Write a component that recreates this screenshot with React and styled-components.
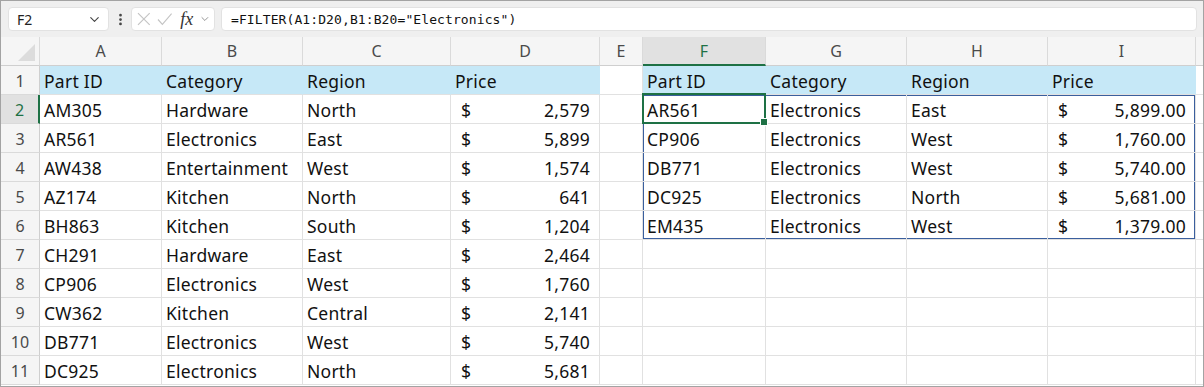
import React from "react";
import styled, { createGlobalStyle, css } from "styled-components";
import { ChevronDown, EllipsisVertical } from "lucide-react";

const Global = createGlobalStyle`
  html, body { margin: 0; padding: 0; background: #ffffff; }
  * { box-sizing: border-box; }
`;

const Frame = styled.div`
  width: 1204px;
  height: 387px;
  border: 1px solid #a3a3a3;
  overflow: hidden;
  background: #ffffff;
  display: flex;
  flex-direction: column;
`;

const Toolbar = styled.div`
  height: 36px;
  flex: none;
  background: #efefef;
  display: flex;
  align-items: center;
  padding: 0 6px 0 7px;
`;

const NameBox = styled.div`
  width: 101px;
  height: 24px;
  background: #fff;
  border-radius: 4px;
  border: 1px solid #e2e2e2;
  display: flex;
  align-items: center;
  justify-content: space-between;
  padding: 0 6px 0 8px;
  font-family: "Noto Sans", sans-serif;
  font-size: 14px;
  color: #222;
`;

const Dots = styled.div`
  width: 22px;
  display: flex;
  justify-content: center;
  color: #444;
`;

const FxBox = styled.div`
  width: 84px;
  height: 24px;
  background: #fff;
  border-radius: 4px;
  border: 1px solid #e2e2e2;
  display: flex;
  align-items: center;
  padding: 0 3px 0 5px;
  gap: 6px;
  color: #c4c4c4;
`;

const Fx = styled.span`
  font-family: "Liberation Serif", serif;
  font-style: italic;
  font-size: 18px;
  color: #333;
  margin-left: 2px;
  line-height: 1;
`;

const FormulaBox = styled.div`
  flex: 1;
  margin-left: 6px;
  height: 24px;
  background: #fff;
  border-radius: 4px;
  border: 1px solid #e2e2e2;
  display: flex;
  align-items: center;
  padding-left: 9px;
  font-family: "DejaVu Sans Mono", monospace;
  font-size: 13px;
  letter-spacing: 0.1px;
  color: #111;
`;

const Sheet = styled.div`
  flex: 1;
  display: grid;
  grid-template-columns: 39px 122px 141px 148px 149px 43px 123px 141px 141px 148px 1fr;
  grid-auto-rows: 29px;
  font-family: "Noto Sans", sans-serif;
`;

const Corner = styled.div`
  position: relative;
  background: #f5f5f5;
  border-right: 1px solid #dadada;
  border-bottom: 1px solid #cfcfcf;
  &::after {
    content: "";
    position: absolute;
    right: 4px;
    bottom: 4px;
    width: 0;
    height: 0;
    border-left: 17px solid transparent;
    border-bottom: 17px solid #dcdcdc;
  }
`;

const ColHead = styled.div`
  background: ${(p) => (p.$active ? "#e1e1e1" : "#f5f5f5")};
  border-right: 1px solid #dadada;
  border-bottom: ${(p) => (p.$active ? "2px solid #1e7145" : "1px solid #cfcfcf")};
  display: flex;
  align-items: center;
  justify-content: center;
  font-size: 16px;
  color: ${(p) => (p.$active ? "#1e7145" : "#4a4a4a")};
  padding-top: ${(p) => (p.$active ? "1px" : "0")};
`;

const RowHead = styled.div`
  background: ${(p) => (p.$active ? "#e1e1e1" : "#f5f5f5")};
  border-right: ${(p) => (p.$active ? "2px solid #1e7145" : "1px solid #cfcfcf")};
  border-bottom: 1px solid #dadada;
  display: flex;
  align-items: center;
  justify-content: center;
  padding-top: 2px;
  font-size: 16px;
  color: ${(p) => (p.$active ? "#1e7145" : "#4a4a4a")};
`;

const SPILL = "#3a5f9e";

const Cell = styled.div`
  position: relative;
  background: ${(p) => (p.$fill ? "#c6e8f7" : "#ffffff")};
  border-right: 1px solid ${(p) => (p.$fill ? "#c6e8f7" : "#e1e1e1")};
  border-bottom: 1px solid #e1e1e1;
  display: flex;
  align-items: center;
  justify-content: space-between;
  padding: 1px 9px 0 4px;
  font-size: 17.5px;
  letter-spacing: 0.25px;
  color: #111;
  white-space: nowrap;
  ${(p) => {
    const s = [];
    if (p.$st) s.push(`inset 0 1px 0 0 ${SPILL}`);
    if (p.$sb) s.push(`inset 0 -1px 0 0 ${SPILL}`);
    if (p.$sl) s.push(`inset 1px 0 0 0 ${SPILL}`);
    if (p.$sr) s.push(`inset -1px 0 0 0 ${SPILL}`);
    return s.length ? css`box-shadow: ${s.join(", ")};` : "";
  }}
  ${(p) =>
    p.$selected &&
    css`
      &::after {
        content: "";
        position: absolute;
        left: -1px;
        top: -2px;
        right: -1px;
        bottom: -1px;
        border: 2px solid #1e7145;
        pointer-events: none;
        z-index: 2;
      }
      &::before {
        content: "";
        position: absolute;
        right: -3px;
        bottom: -3px;
        width: 6px;
        height: 6px;
        background: #1e7145;
        border: 1px solid #fff;
        z-index: 3;
      }
    `}
`;

const Dollar = styled.span`
  padding-left: 6px;
`;

const CancelIcon = () => (
  <svg width="14" height="14" viewBox="0 0 14 14" fill="none" stroke="currentColor" strokeWidth="1.2">
    <path d="M1 1 L13 13 M13 1 L1 13" />
  </svg>
);

const EnterIcon = () => (
  <svg width="16" height="14" viewBox="0 0 16 14" fill="none" stroke="currentColor" strokeWidth="1.2">
    <path d="M1 7.5 L5.5 12.5 L15 1.5" />
  </svg>
);

const cols = ["A", "B", "C", "D", "E", "F", "G", "H", "I", ""];

const left = [
  ["AM305", "Hardware", "North", "2,579"],
  ["AR561", "Electronics", "East", "5,899"],
  ["AW438", "Entertainment", "West", "1,574"],
  ["AZ174", "Kitchen", "North", "641"],
  ["BH863", "Kitchen", "South", "1,204"],
  ["CH291", "Hardware", "East", "2,464"],
  ["CP906", "Electronics", "West", "1,760"],
  ["CW362", "Kitchen", "Central", "2,141"],
  ["DB771", "Electronics", "West", "5,740"],
  ["DC925", "Electronics", "North", "5,681"],
];

const right = [
  ["AR561", "Electronics", "East", "5,899.00"],
  ["CP906", "Electronics", "West", "1,760.00"],
  ["DB771", "Electronics", "West", "5,740.00"],
  ["DC925", "Electronics", "North", "5,681.00"],
  ["EM435", "Electronics", "West", "1,379.00"],
];

const header = ["Part ID", "Category", "Region", "Price"];

function Price({ value, ...rest }) {
  return (
    <Cell {...rest}>
      <Dollar>$</Dollar>
      <span>{value}</span>
    </Cell>
  );
}

export default function App() {
  const rows = [];
  rows.push(
    <RowHead key="rh1">1</RowHead>,
    ...header.map((h, i) => (
      <Cell key={"l1" + i} $fill>
        <span>{h}</span>
      </Cell>
    )),
    <Cell key="e1" />,
    ...header.map((h, i) => (
      <Cell key={"r1" + i} $fill>
        <span>{h}</span>
      </Cell>
    )),
    <Cell key="j1" />
  );
  for (let r = 0; r < 10; r++) {
    const n = r + 2;
    const L = left[r];
    const R = right[r];
    const inSpill = r < 5;
    const sp = (ci) => ({
      $st: inSpill && r === 0,
      $sb: inSpill && r === 4,
      $sl: inSpill && ci === 0,
      $sr: inSpill && ci === 3,
    });
    rows.push(
      <RowHead key={"rh" + n} $active={n === 2}>
        {n}
      </RowHead>,
      <Cell key={"a" + n}>
        <span>{L[0]}</span>
      </Cell>,
      <Cell key={"b" + n}>
        <span>{L[1]}</span>
      </Cell>,
      <Cell key={"c" + n}>
        <span>{L[2]}</span>
      </Cell>,
      <Price key={"d" + n} value={L[3]} />,
      <Cell key={"e" + n} />
    );
    if (R) {
      rows.push(
        <Cell key={"f" + n} {...sp(0)} $selected={r === 0}>
          <span>{R[0]}</span>
        </Cell>,
        <Cell key={"g" + n} {...sp(1)}>
          <span>{R[1]}</span>
        </Cell>,
        <Cell key={"h" + n} {...sp(2)}>
          <span>{R[2]}</span>
        </Cell>,
        <Price key={"i" + n} value={R[3]} {...sp(3)} />
      );
    } else {
      rows.push(
        <Cell key={"f" + n} />,
        <Cell key={"g" + n} />,
        <Cell key={"h" + n} />,
        <Cell key={"i" + n} />
      );
    }
    rows.push(<Cell key={"j" + n} />);
  }

  return (
    <>
      <Global />
      <Frame>
        <Toolbar>
          <NameBox>
            <span>F2</span>
            <ChevronDown size={15} color="#444" strokeWidth={1.8} />
          </NameBox>
          <Dots>
            <EllipsisVertical size={15} strokeWidth={2.4} />
          </Dots>
          <FxBox>
            <CancelIcon />
            <EnterIcon />
            <Fx>fx</Fx>
            <ChevronDown size={12} color="#777" strokeWidth={1.6} />
          </FxBox>
          <FormulaBox>=FILTER(A1:D20,B1:B20="Electronics")</FormulaBox>
        </Toolbar>
        <Sheet>
          <Corner />
          {cols.map((c) => (
            <ColHead key={"ch" + c} $active={c === "F"}>
              {c}
            </ColHead>
          ))}
          {rows}
        </Sheet>
      </Frame>
    </>
  );
}
